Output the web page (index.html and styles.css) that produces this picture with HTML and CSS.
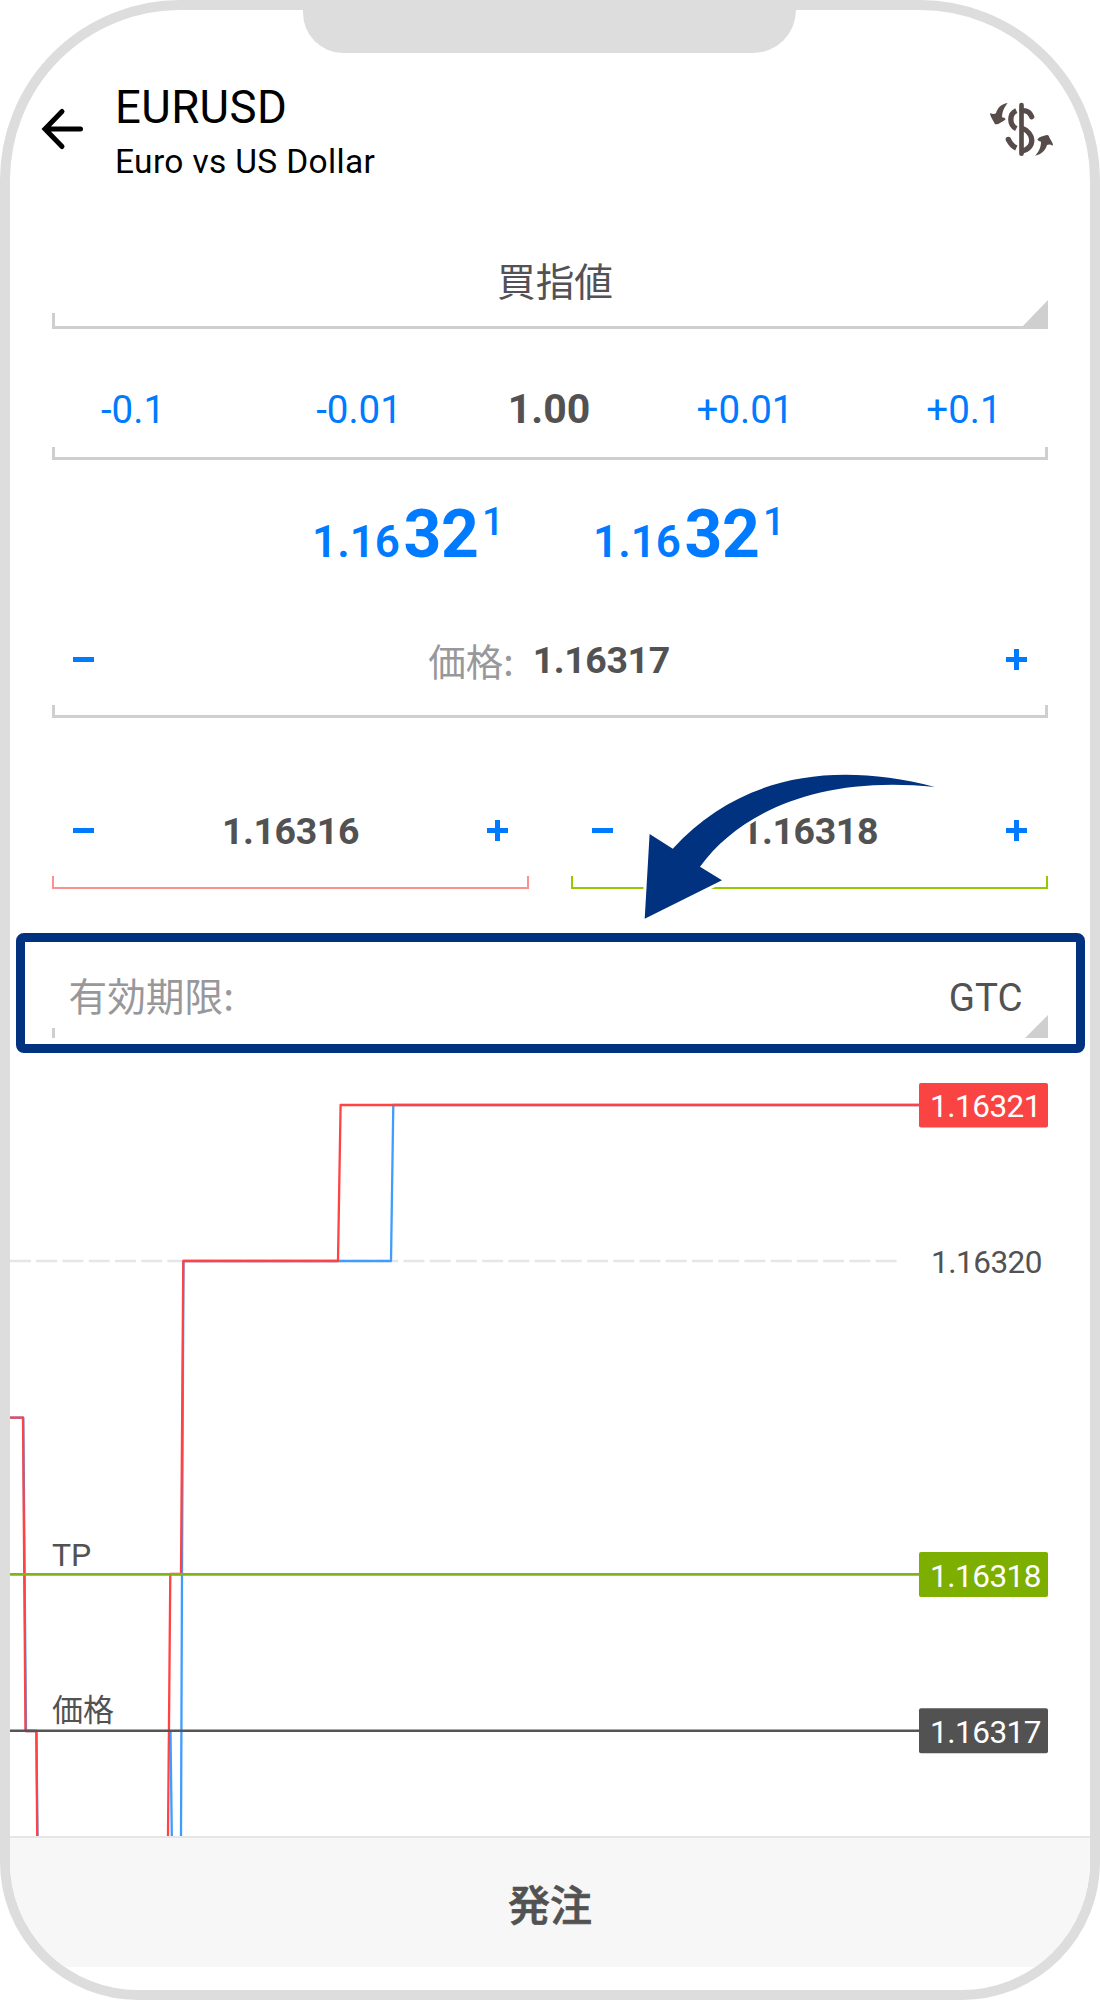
FILE: index.html
```html
<!DOCTYPE html>
<html lang="ja">
<head>
<meta charset="utf-8">
<title>EURUSD</title>
<link rel="stylesheet" href="styles.css">
</head>
<body>
<main class="phone">
  <div class="notch"></div>
  <header class="header">
    <svg class="back" width="44" height="44" viewBox="0 0 44 44"><path d="M39.5 22H6M21 4.500L4 22l17 17.500" fill="none" stroke="#000" stroke-width="5" stroke-linecap="round" stroke-linejoin="miter"/></svg>
    <div class="titles">
      <h1 class="symbol">EURUSD</h1>
      <p class="name">Euro vs US Dollar</p>
    </div>
    <svg class="trade" width="100" height="80" viewBox="0 0 300 240">
      <g fill="none" stroke="#574c49" stroke-width="16">
        <path d="M154.500 45V191" stroke-width="14" stroke-linecap="round"/>
        <path d="M139 62C117 72 117 104 139 116"/>
        <path d="M156 62C171 61 181 69 185 80" stroke-linecap="round"/>
        <path d="M156 115C193 128 197 174 156 183"/>
        <path d="M115 148Q124 167 139 174"/>
      </g>
      <circle cx="115" cy="148" r="8" fill="#574c49"/>
      <path fill="#574c49" d="M113 39C91 42 82 56 78 70Q70 75 61 69C58 76 70 91 74 101C77 105 84 102 91 98Q99 96 107 88Q105 82 96 82C97 61 105 49 113 39Z"/>
      <path fill="#574c49" d="M195 197C216 193 226 181 231 165Q239 161 248 167C252 160 239 147 236 137C233 132 224 136 217 139Q208 141 202 148Q205 155 213 155C213 173 205 187 195 197Z"/>
    </svg>
  </header>

  <section class="field type">
    <div class="row"><span class="value">買指値</span></div>
    <div class="bracket"></div>
    <i class="corner"></i>
  </section>

  <section class="field volume">
    <div class="row">
      <span>-0.1</span><span>-0.01</span><b>1.00</b><span>+0.01</span><span>+0.1</span>
    </div>
    <div class="bracket"></div>
  </section>

  <section class="quotes">
    <div class="quote"><span class="base">1.16</span><span class="big">32</span><span class="pip">1</span></div>
    <div class="quote"><span class="base">1.16</span><span class="big">32</span><span class="pip">1</span></div>
  </section>

  <section class="field price">
    <div class="row">
      <i class="minus"></i>
      <div class="center"><span class="label">価格:</span><b>1.16317</b></div>
      <i class="plus"></i>
    </div>
    <div class="bracket"></div>
  </section>

  <section class="stops">
    <div class="stop sl">
      <div class="row"><i class="minus"></i><b>1.16316</b><i class="plus"></i></div>
      <div class="bracket"></div>
    </div>
    <div class="stop tp">
      <div class="row"><i class="minus"></i><b>1.16318</b><i class="plus"></i></div>
      <div class="bracket"></div>
    </div>
  </section>

  <section class="expiry">
    <span class="label">有効期限:</span>
    <span class="gtc">GTC</span>
    <i class="tick"></i>
    <i class="corner"></i>
  </section>

  <svg class="chart" width="1080" height="783" viewBox="10 1053 1080 783">
    <path d="M10 1261H898" stroke="#e6e6e6" stroke-width="2.500" stroke-dasharray="21 5.230" fill="none"/>
    <g fill="none" stroke="#409cff" stroke-width="2.300" stroke-linejoin="round">
      <path d="M10 1417.700H23.300L26 1731H36.500L37.500 1836"/>
      <path d="M171.800 1836L170.500 1731"/>
      <path d="M181 1836L182 1574L183.500 1261H391L393.300 1105H919"/>
    </g>
    <g fill="none" stroke="#ff4242" stroke-width="2.300" stroke-linejoin="round">
      <path d="M10 1417.700H23L25.500 1731H36.300L37.200 1836"/>
      <path d="M168 1836L170.300 1574H181L183.300 1261H338L340.600 1105H919"/>
    </g>
    <path d="M10 1574.300H919" stroke="#82b414" stroke-width="2.800"/>
    <path d="M10 1730.800H919" stroke="#555" stroke-width="2.500"/>
    <rect x="919" y="1083" width="129" height="44.500" rx="2" fill="#fa4343"/>
    <rect x="919" y="1552" width="129" height="45" rx="2" fill="#7daf00"/>
    <rect x="919" y="1708.300" width="129" height="45" rx="2" fill="#525252"/>
    <g class="ticks">
      <text x="930" y="1117" fill="#fff">1.16321</text>
      <text x="931" y="1273" fill="#525252">1.16320</text>
      <text x="930" y="1587" fill="#fff">1.16318</text>
      <text x="930" y="1743" fill="#fff">1.16317</text>
      <text class="tag" x="52" y="1566" fill="#525252">TP</text>
      <text class="cjk" x="52" y="1721" fill="#525252">価格</text>
    </g>
  </svg>

  <footer class="submit"><span>発注</span></footer>

  <svg class="pointer" width="310" height="160" viewBox="635 765 310 160">
    <path d="M934.800 787C830 760 738 777 672.800 848.700L649.600 834L644.700 918.700L722 880.300L700 866.700C740 812 820 775 934.800 787Z" fill="#fff" stroke="#fff" stroke-width="6"/>
    <path d="M934.800 787C830 760 738 777 672.800 848.700L649.600 834L644.700 918.700L722 880.300L700 866.700C740 812 820 775 934.800 787Z" fill="#00327f"/>
  </svg>
</main>
</body>
</html>
```
FILE: styles.css
```css
* { box-sizing: border-box; }

body {
  margin: 0;
  background: #fff;
  font-family: Roboto, "Noto Sans CJK JP", sans-serif;
  color: #525252;
}

.phone {
  position: relative;
  width: 1100px;
  height: 2000px;
  border: 10px solid #ddd;
  border-radius: 180px 180px 138px 138px;
  background: #fff;
  overflow: hidden;
}

.notch {
  position: absolute;
  top: 0;
  left: 293px;
  width: 493px;
  height: 43px;
  border-radius: 0 0 46px 43px;
  background: #ddd;
}

.header {
  display: flex;
  align-items: flex-start;
  height: 230px;
  padding: 71px 20px 0 31px;
  color: #000;
}
.back { flex: none; margin-top: 26px; }
.titles { flex: 1; padding-left: 30px; }
.symbol { margin: 0; font-size: 45.5px; line-height: 54px; font-weight: 400; letter-spacing: 0.4px; }
.name { margin: 0; font-size: 33.5px; line-height: 54px; font-weight: 400; letter-spacing: 0.35px; }
.trade { flex: none; margin-top: 9px; }

.field { position: relative; margin: 0 42px; }
.row { display: flex; align-items: center; }
.bracket { height: 13px; border: 3px solid #cfcfcf; border-top: 0; }

.corner {
  position: absolute;
  background: #cfcfcf;
  clip-path: polygon(100% 0, 100% 100%, 0 100%);
}

.minus, .plus {
  flex: none;
  width: 21px;
  height: 21px;
  background: linear-gradient(#007aff, #007aff) center / 21px 5px no-repeat;
}
.plus {
  background:
    linear-gradient(#007aff, #007aff) center / 21px 5px no-repeat,
    linear-gradient(#007aff, #007aff) center / 5px 21px no-repeat;
}

.type .row { height: 73px; justify-content: center; padding: 12px 0 0 10px; }
.type .bracket { height: 16px; }
.type .corner { right: 0; bottom: 0; width: 28px; height: 29px; }
.value { font-size: 38.7px; line-height: 40px; color: #525256; }

.volume .row {
  display: grid;
  grid-template-columns: 156px 296px 92px 292px 146px;
  height: 118px;
  padding-top: 43px;
  text-align: center;
  font-size: 38.5px;
  line-height: 40px;
  color: #007aff;
}
.volume span { padding-left: 6px; }
.volume b { margin: -1px 2px 0 0; font-size: 41px; color: #525252; }

.quotes {
  display: flex;
  gap: 89px;
  height: 140px;
  padding: 40px 0 0 302px;
  color: #007aff;
}
.quote { display: flex; align-items: baseline; width: 192px; line-height: 70px; font-weight: 700; }
.base { width: 92px; font-size: 44px; font-weight: 600; }
.big { width: 79px; font-size: 66px; letter-spacing: -0.5px; }
.pip { position: relative; top: -22px; font-size: 38.5px; font-weight: 500; }

.price .row, .stop .row { justify-content: space-between; padding-left: 21px; padding-right: 21px; }
.price .row { height: 105px; padding-top: 14px; }
.price b, .stop b { padding-top: 1px; font-size: 37.5px; line-height: 40px; letter-spacing: -0.4px; }
.label {
  font-family: "Noto Sans CJK JP", sans-serif;
  font-size: 38.7px;
  line-height: 40px;
  color: #98989b;
}
.price .center { display: flex; align-items: center; gap: 19px; margin-right: 2px; }
.price .label { padding-top: 1px; font-size: 37.5px; }

.stops { display: flex; gap: 42px; margin: 0 42px; }
.stop { flex: 1; }
.stop .row { height: 158px; padding-top: 67px; }
.stop .bracket { border-width: 2px; }
.sl .bracket { border-color: #fa9090; }
.tp .bracket { border-color: #96c800; }

.expiry {
  position: relative;
  display: flex;
  justify-content: space-between;
  height: 120px;
  margin: 44px 5.5px 0;
  padding: 36px 53px 0 44px;
  border: 9px solid #00327f;
  border-radius: 8px;
}
.expiry .label { margin-top: -4px; }
.gtc { font-size: 38.5px; line-height: 40px; margin-top: 0; }
.tick { position: absolute; left: 27.500px; bottom: 6px; width: 3px; height: 10px; background: #cfcfcf; }
.expiry .corner { right: 27.500px; bottom: 6px; width: 23px; height: 23px; }

.chart { display: block; }
.ticks { font-size: 31.5px; letter-spacing: -0.5px; }
.tag { font-size: 32px; letter-spacing: 0; }
.cjk { font-size: 31px; letter-spacing: 0; }

.submit {
  display: flex;
  align-items: center;
  justify-content: center;
  height: 131px;
  border-top: 2px solid #e6e6e6;
  background: #f7f7f7;
  font-size: 42px;
  font-weight: 500;
  -webkit-text-stroke: 0.7px #525252;
}

.pointer { position: absolute; left: 625px; top: 755px; }
```
